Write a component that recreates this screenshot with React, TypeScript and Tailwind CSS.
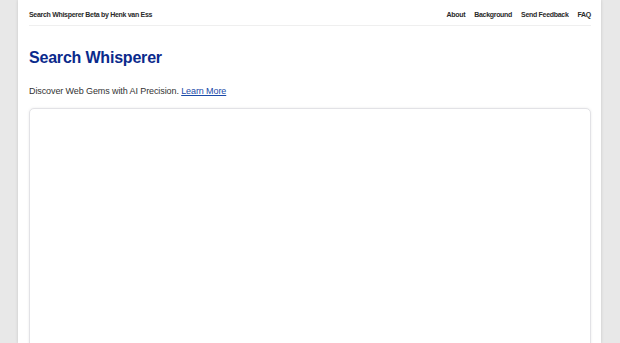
export default function App() {
  return (
    <div className="h-[343px] bg-[#e8e8e8] flex justify-center overflow-hidden" style={{ fontFamily: '"Liberation Sans", Arial, sans-serif' }}>
      <div className="w-[583px] ml-[-1px] bg-white shadow-[0_0_3px_rgba(0,0,0,0.15)] pl-[11px] pr-[10px] h-[343px] overflow-hidden">
        <header className="flex items-center justify-between h-[26px] border-b border-[#efefef] pt-[5px] text-[7px] text-[#2a2a2a] tracking-[-0.3px] font-bold">
          <div>Search Whisperer Beta by Henk van Ess</div>
          <nav className="flex gap-[9px]">
            <span>About</span>
            <span>Background</span>
            <span>Send Feedback</span>
            <span>FAQ</span>
          </nav>
        </header>
        <h1 className="mt-[22px] text-[16px] leading-[20px] font-bold text-[#0a2a8c] tracking-[-0.2px]">Search Whisperer</h1>
        <p className="mt-[17px] text-[9px] leading-[12px] text-[#333] tracking-[-0.1px]">
          Discover Web Gems with AI Precision.{" "}
          <a className="text-[#1a4aa8] underline">Learn More</a>
        </p>
        <div className="mt-[11px] h-[260px] rounded-[5px] border border-[#e2e2e6] shadow-[0_0_3px_rgba(0,0,0,0.08)] bg-white" />
      </div>
    </div>
  );
}
